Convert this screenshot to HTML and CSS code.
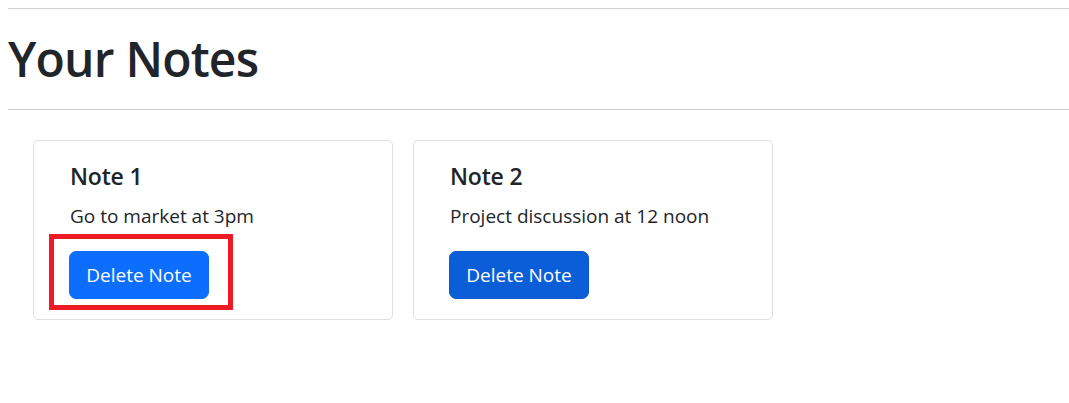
FILE: index.html
```html
<!DOCTYPE html>
<html lang="en">
<head>
<meta charset="utf-8">
<title>Your Notes</title>
<link rel="stylesheet" href="styles.css">
</head>
<body>
<hr class="rule rule-top">
<h1 class="page-title">Your Notes</h1>
<hr class="rule rule-bottom">
<div class="notes">
  <div class="card">
    <div class="card-body">
      <h5 class="card-title">Note 1</h5>
      <p class="card-text">Go to market at 3pm</p>
      <button class="btn btn-primary">Delete Note</button>
    </div>
    <div class="highlight"></div>
  </div>
  <div class="card">
    <div class="card-body">
      <h5 class="card-title">Note 2</h5>
      <p class="card-text">Project discussion at 12 noon</p>
      <button class="btn btn-primary btn-hover">Delete Note</button>
    </div>
  </div>
</div>
</body>
</html>
```
FILE: styles.css
```css
* { box-sizing: border-box; }
html, body { background: #fff; }
body {
  margin: 8px 0 0 8px;
  font-family: "Open Sans", "Noto Sans", sans-serif;
  color: #212529;
}
.rule {
  border: 0;
  border-top: 1px solid #cfcfcf;
  margin: 0;
  height: 0;
}
.page-title {
  margin: 20px 0 0 0;
  font-size: 48px;
  line-height: 60px;
  font-weight: 600;
  letter-spacing: -0.8px;
}
.rule-bottom { margin-top: 20px; }
.notes {
  display: flex;
  gap: 20px;
  padding: 30px 0 0 25px;
}
.card {
  position: relative;
  width: 360px;
  border: 1px solid #dfdfdf;
  border-radius: 5px;
  background: #fff;
}
.card-body {
  padding: 20px 36px 20px 36px;
}
.card-title {
  margin: 0 0 10px 0;
  font-size: 23px;
  line-height: 30px;
  font-weight: 600;
  letter-spacing: -0.2px;
}
.card-text {
  margin: 0 0 20px 0;
  font-size: 19px;
  line-height: 30px;
}
.btn {
  display: block;
  width: 140px;
  height: 48px;
  border: 1px solid #0d6efd;
  border-radius: 7px;
  background: #0d6efd;
  color: #fff;
  font-family: inherit;
  font-size: 19px;
  line-height: 28px;
  padding: 0;
  margin-left: -1px;
}
.btn-hover {
  background: #0b5ed7;
  border-color: #0a58ca;
}
.highlight {
  position: absolute;
  left: 15px;
  top: 93px;
  width: 184px;
  height: 76px;
  border: 5px solid #ed1c24;
}
```
